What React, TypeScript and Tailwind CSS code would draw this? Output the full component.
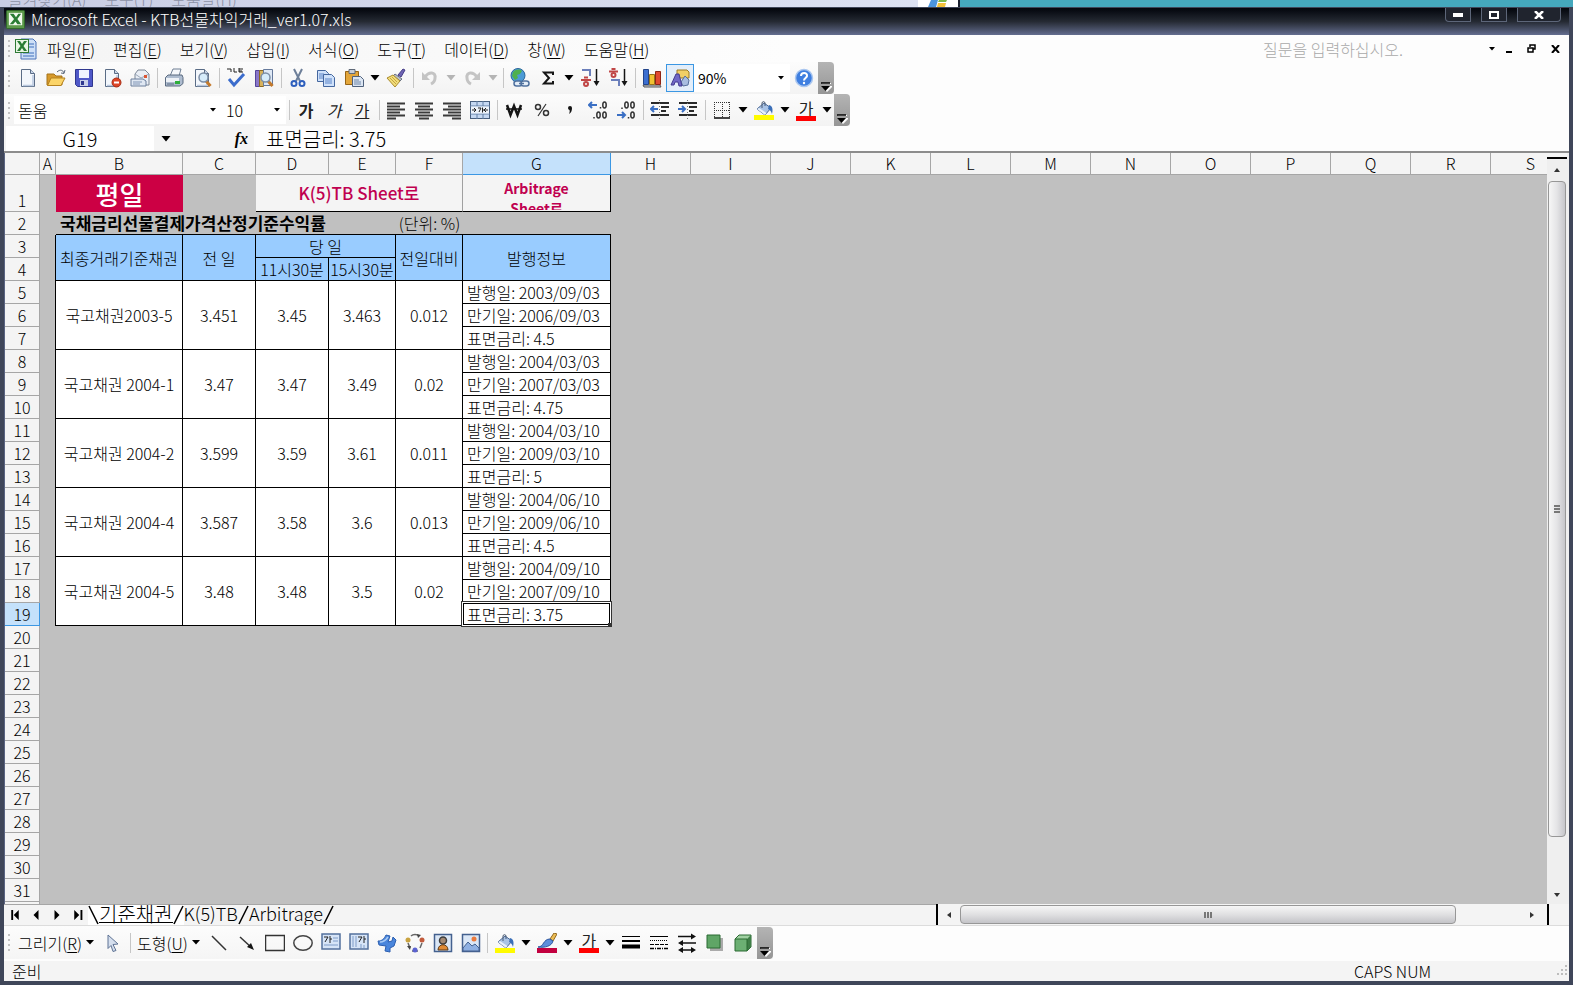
import React from "react";
import clsx from "clsx";

type IconItem = { name: string; icon: React.ReactNode };
type Bond = {
  name: string;
  prev: string;
  morning: string;
  afternoon: string;
  diff: string;
  info: string[];
};

const menus = [
  ["파일", "F"],
  ["편집", "E"],
  ["보기", "V"],
  ["삽입", "I"],
  ["서식", "O"],
  ["도구", "T"],
  ["데이터", "D"],
  ["창", "W"],
  ["도움말", "H"],
];

const bonds: Bond[] = [
  {
    name: "국고채권2003-5",
    prev: "3.451",
    morning: "3.45",
    afternoon: "3.463",
    diff: "0.012",
    info: ["발행일: 2003/09/03", "만기일: 2006/09/03", "표면금리: 4.5"],
  },
  {
    name: "국고채권 2004-1",
    prev: "3.47",
    morning: "3.47",
    afternoon: "3.49",
    diff: "0.02",
    info: ["발행일: 2004/03/03", "만기일: 2007/03/03", "표면금리: 4.75"],
  },
  {
    name: "국고채권 2004-2",
    prev: "3.599",
    morning: "3.59",
    afternoon: "3.61",
    diff: "0.011",
    info: ["발행일: 2004/03/10", "만기일: 2009/03/10", "표면금리: 5"],
  },
  {
    name: "국고채권 2004-4",
    prev: "3.587",
    morning: "3.58",
    afternoon: "3.6",
    diff: "0.013",
    info: ["발행일: 2004/06/10", "만기일: 2009/06/10", "표면금리: 4.5"],
  },
  {
    name: "국고채권 2004-5",
    prev: "3.48",
    morning: "3.48",
    afternoon: "3.5",
    diff: "0.02",
    info: ["발행일: 2004/09/10", "만기일: 2007/09/10", "표면금리: 3.75"],
  },
];

const restColumns = ["H", "I", "J", "K", "L", "M", "N", "O", "P", "Q", "R", "S"];
const emptyRows = [20, 21, 22, 23, 24, 25, 26, 27, 28, 29, 30, 31];

const Svg: React.FC<{ children: React.ReactNode }> = ({ children }) => (
  <svg width="20" height="20" viewBox="0 0 20 20" fill="none" aria-hidden="true">
    {children}
  </svg>
);

const Page = () => (
  <>
    <path d="M3.500 1.500h9l4 4v13h-13z" fill="#f3f7fc" stroke="#5a6c86" />
    <path d="M12.500 1.500v4h4" fill="#c9d6e8" stroke="#5a6c86" />
    <path d="M15 7v10.500H5" stroke="#b9c8de" strokeWidth="1.500" />
  </>
);

const Glass = () => (
  <>
    <path d="M14 13l4.500 5" stroke="#c47a2c" strokeWidth="3" />
    <circle cx="11.500" cy="9.500" r="4.500" fill="#d6ecfb" stroke="#7c8ea6" strokeWidth="1.500" />
  </>
);

const Bucket = () => (
  <>
    <path d="M3 9l7-6 7 5-6 7z" fill="#a9c3e6" stroke="#4a6794" />
    <path d="M3 9l8 6 1.500-2L5 8z" fill="#e6effa" />
    <path d="M15 5c4 1 4 5 3 9-1-3-2-4-4-5z" fill="#3b6fb8" />
    <path d="M8 8V2.500a2 2 0 0 1 3 0V6" stroke="#4a5a72" />
  </>
);

const ExcelLogo: React.FC<{ size: number }> = ({ size }) => (
  <svg width={size} height={size} viewBox="0 0 20 20" aria-hidden="true">
    <rect x="0.500" y="0.500" width="19" height="19" rx="1" fill="#5d9a4b" stroke="#2f6a28" />
    <path d="M3 3h14v13H3z" fill="#f2faee" />
    <path d="M4 4h4l2.500 3.500L13 4h3l-4 5.500 4 5.500h-4l-2-3-2.500 3H4l4.500-5.500z" fill="#2a7d34" />
  </svg>
);

const DocLogo = () => (
  <svg width="22" height="22" viewBox="0 0 22 22" aria-hidden="true">
    <path d="M6 1h12l3 3v17H6z" fill="#cfe0f7" stroke="#4a72b8" />
    <path d="M14 6h5M14 9h5M8 15h11M8 18h11" stroke="#6f94d0" strokeWidth="1.500" />
    <rect x="0.500" y="1.500" width="13" height="13" fill="#e9f6e4" stroke="#2f7a35" />
    <path d="M2 3h3l2 3 2-3h3L8.500 8 12 13H9l-2-3-2 3H2l3.500-5z" fill="#2a7d34" />
  </svg>
);

const fileIcons: IconItem[] = [
  { name: "새로 만들기", icon: <Page /> },
  {
    name: "열기",
    icon: (
      <>
        <path d="M1 6h7l2 2h6v9H1z" fill="#d79a2b" stroke="#a5731b" />
        <path d="M1.500 17.500L5 10h14l-4 7.500z" fill="#fbd468" stroke="#b5821f" />
        <path d="M11 4c3-3 6-2 7 1m1-3l-1 3.500L15 5" stroke="#5d6a7c" />
      </>
    ),
  },
  {
    name: "저장",
    icon: (
      <>
        <path d="M1.500 1.500h17v17h-15l-2-2z" fill="#4f58c8" stroke="#30388f" />
        <path d="M5 2h10v8H5z" fill="#eef2ff" />
        <path d="M6 12h8v6H6z" fill="#c9cfe8" />
        <path d="M7 13h3v4H7z" fill="#30388f" />
      </>
    ),
  },
  {
    name: "권한",
    icon: (
      <>
        <Page />
        <circle cx="14.500" cy="14.500" r="4.500" fill="#dd4527" stroke="#a82d14" />
        <path d="M12 14.500h5" stroke="#fff" strokeWidth="2" />
      </>
    ),
  },
  {
    name: "전자 메일",
    icon: (
      <>
        <path d="M5 11V6l3-4h7l4 4v11H9z" fill="#e9eef5" stroke="#7d8796" />
        <path d="M5 6l6 4 8-4" stroke="#9aa7b8" />
        <path d="M14 7h3v3h-3z" fill="#db5634" />
        <path d="M1 11h12l3 2v5H1z" fill="#dfe7f2" stroke="#6b7f9c" />
        <path d="M3 14h9M3 16h7" stroke="#8196b6" />
      </>
    ),
  },
];

const PrintIcon = () => (
  <Svg>
    <path d="M6 8l3-7h8l-2 7z" fill="#f6f8fb" stroke="#6f7f94" />
    <path d="M1.500 9.500L4 7h14l1 2.500v6L16 18H1.500z" fill="#aebccf" stroke="#5a6a80" />
    <path d="M2 10h13v4H2z" fill="#eef2f7" />
    <path d="M11 13h5v3h-5z" fill="#2fae3b" />
    <path d="M3 16h7" stroke="#5a6a80" />
  </Svg>
);

const PreviewIcon = () => (
  <Svg>
    <Page />
    <Glass />
  </Svg>
);

const SpellIcon = () => (
  <Svg>
    <path d="M1 1h4v3M8 0v4h3M13 1h4M13 3h3M13 0v4h4" stroke="#222" />
    <path d="M3 11l5 6L18 6" stroke="#3b6ccc" strokeWidth="3" />
  </Svg>
);

const ResearchIcon = () => (
  <Svg>
    <path d="M1.500 2.500h4v16h-4z" fill="#8a77c8" stroke="#54459a" />
    <path d="M5.500 2.500h4v16h-4z" fill="#d8b25c" stroke="#8d6a22" />
    <path d="M9.500 1.500h9v16h-9z" fill="#dfe9f6" stroke="#65799b" />
    <Glass />
  </Svg>
);

const CutIcon = () => (
  <Svg>
    <path d="M6 1l6 12M14 1L8 13" stroke="#6d7f99" strokeWidth="2" />
    <circle cx="6" cy="15.500" r="2.500" stroke="#2d5fbd" strokeWidth="2" />
    <circle cx="14" cy="15.500" r="2.500" stroke="#2d5fbd" strokeWidth="2" />
  </Svg>
);

const CopyIcon = () => (
  <Svg>
    <path d="M1.500 2.500h8l3 3v8h-11z" fill="#cfe1fa" stroke="#44679f" />
    <path d="M3 6h5M3 8h5M3 10h5" stroke="#5b84c8" />
    <path d="M7.500 6.500h8l3 3v9h-11z" fill="#cfe1fa" stroke="#44679f" />
    <path d="M9 11h7M9 13h7M9 15h7" stroke="#5b84c8" />
  </Svg>
);

const PasteIcon = () => (
  <Svg>
    <path d="M1.500 3.500h13v13h-13z" fill="#e3a63a" stroke="#966415" />
    <path d="M5 1.500h6v4H5z" fill="#c9cfd8" stroke="#606a78" />
    <path d="M8.500 8.500h8l3 3v7h-11z" fill="#dbe5f2" stroke="#4f617c" />
    <path d="M10 12h5M10 14h7M10 16h7" stroke="#6f86a8" />
  </Svg>
);

const BrushIcon = () => (
  <Svg>
    <path d="M12 7l5-6 2 1-4 7z" fill="#6e64b4" stroke="#453c86" />
    <path d="M9 6l7 5-2 2-7-5z" fill="#b9bfca" stroke="#6b7280" />
    <path d="M7 7l7 6-5 6-8-9z" fill="#f2dd7a" stroke="#a98a2c" />
    <path d="M4 10l6 6M6 9l5 5" stroke="#c4a440" />
  </Svg>
);

const UndoIcon: React.FC<{ redo?: boolean }> = ({ redo }) => (
  <Svg>
    <g transform={redo ? "matrix(-1 0 0 1 20 0)" : undefined}>
      <path d="M5 9c4-6 11-5 10 1 0 3-2 5-4 6" stroke="#c4c4c4" strokeWidth="3" />
      <path d="M2 4v8h8z" fill="#c4c4c4" />
    </g>
  </Svg>
);

const LinkIcon = () => (
  <Svg>
    <circle cx="8" cy="7.500" r="7" fill="#4c9bd6" stroke="#2b659c" />
    <path d="M3 4c3-3 7-3 9-1l-2 3-3 1 1 3-3 2-3-4z" fill="#4fb04f" />
    <rect x="4" y="13" width="8" height="5" rx="2.500" fill="#e4edf7" stroke="#50719e" strokeWidth="1.500" />
    <rect x="11" y="13" width="8" height="5" rx="2.500" fill="#e4edf7" stroke="#50719e" strokeWidth="1.500" />
    <path d="M9 15.500h5" stroke="#50719e" strokeWidth="1.500" />
  </Svg>
);

const SumIcon = () => (
  <Svg>
    <path d="M15 7V4.500H6l5 5.500-5 5.500h9V13" stroke="#151515" strokeWidth="2" />
  </Svg>
);

const SortIcon: React.FC<{ desc?: boolean }> = ({ desc }) => (
  <Svg>
    {desc ? (
      <>
        <path d="M1 3.500h9M3.500 1h4" stroke="#c04646" strokeWidth="2" />
        <circle cx="5.500" cy="7" r="2" stroke="#c04646" strokeWidth="2" />
        <path d="M3 12h8v6" stroke="#6b7fbb" strokeWidth="2" />
      </>
    ) : (
      <>
        <path d="M2 2h8v6" stroke="#6b7fbb" strokeWidth="2" />
        <path d="M1 12h10M4 9.500h4" stroke="#c04646" strokeWidth="2" />
        <circle cx="6" cy="16" r="2" stroke="#c04646" strokeWidth="2" />
      </>
    )}
    <path d="M16.500 1v15" stroke="#151515" strokeWidth="1.500" />
    <path d="M13.500 13h6l-3 5z" fill="#151515" />
  </Svg>
);

const ChartIcon = () => (
  <Svg>
    <path d="M1 17h17l1 2H2z" fill="#c9cdd4" stroke="#555" />
    <path d="M1.500 1.500h5v15h-5z" fill="#3c6fd0" stroke="#23448a" />
    <path d="M7.500 6.500h5v10h-5z" fill="#f1c232" stroke="#97741a" />
    <path d="M13.500 3.500h5v13h-5z" fill="#e0492f" stroke="#8e2413" />
  </Svg>
);

const DrawingIcon = () => (
  <Svg>
    <path d="M7 2h10l2 2v6h-9L7 7z" fill="#f1cf66" stroke="#9c7a25" />
    <path d="M11 14l4-6 4 4-1 5-5 1z" fill="#a8bde0" stroke="#56709c" />
    <path d="M1 17L6 6h3l3 12H9l-1-4H5l-1 3z" fill="#6f68c6" stroke="#423b91" />
  </Svg>
);

const HelpIcon = () => (
  <Svg>
    <circle cx="10" cy="10" r="8.500" fill="#3f7fe0" stroke="#a9c6ef" strokeWidth="1.500" />
    <path d="M7 8c0-4 6.500-4 6 0-.3 2-3 2-3 4.500" stroke="#fff" strokeWidth="2" />
    <circle cx="10" cy="15" r="1.200" fill="#fff" />
  </Svg>
);

const alignPaths = {
  left: "M1 6.500h13M1 12.500h13M1 18.500h9",
  center: "M4 6.500h12M4 12.500h12M5 18.500h10",
  right: "M6 6.500h13M6 12.500h13M10 18.500h9",
};

const AlignIcon: React.FC<{ align: keyof typeof alignPaths }> = ({ align }) => (
  <Svg>
    <path d="M1 3.500h18M1 9.500h18M1 15.500h18" stroke="#3a3a3a" strokeWidth="2" />
    <path d={alignPaths[align]} stroke="#3a3a3a" strokeWidth="2" />
  </Svg>
);

const MergeIcon = () => (
  <Svg>
    <rect x="0.500" y="1.500" width="19" height="17" fill="#c5d8f2" stroke="#49607f" />
    <path d="M0 6h20M0 14h20M7 1v5M13 1v5M7 14v5M13 14v5" stroke="#6580a6" />
    <path d="M1 6.500h18v7H1z" fill="#eef4fc" />
    <path d="M2 10h4M18 10h-4M4 8l2 2-2 2M16 8l-2 2 2 2M8 8h3l-2 4M12.500 7.500v5M12.500 10h1.500" stroke="#222" />
  </Svg>
);

const WonIcon = () => (
  <Svg>
    <path d="M3 5l3.500 10L10 6l3.500 9L17 5" stroke="#151515" strokeWidth="2.500" />
    <path d="M2 9h16" stroke="#151515" strokeWidth="1.500" />
  </Svg>
);

const PercentIcon = () => (
  <Svg>
    <circle cx="6" cy="7" r="2.500" stroke="#333" strokeWidth="1.500" />
    <circle cx="14" cy="13" r="2.500" stroke="#333" strokeWidth="1.500" />
    <path d="M14 4L6 16" stroke="#333" strokeWidth="1.200" />
  </Svg>
);

const CommaIcon = () => (
  <Svg>
    <path d="M8 8a2 2 0 1 1 4 0c0 3-1 5-3 6 .5-1 1-3 .5-4A2 2 0 0 1 8 8z" fill="#151515" />
  </Svg>
);

const DecimalIcon: React.FC<{ less?: boolean }> = ({ less }) => (
  <Svg>
    <g stroke="#333" strokeWidth="1.500">
      {less ? (
        <>
          <ellipse cx="10.500" cy="5" rx="1.700" ry="3" />
          <ellipse cx="16.500" cy="5" rx="1.700" ry="3" />
          <ellipse cx="16.500" cy="15" rx="1.700" ry="3" />
          <path d="M6 7.500v1.500M12.500 17v1.500" />
        </>
      ) : (
        <>
          <ellipse cx="16.500" cy="5" rx="1.700" ry="3" />
          <ellipse cx="10.500" cy="15" rx="1.700" ry="3" />
          <ellipse cx="16.500" cy="15" rx="1.700" ry="3" />
          <path d="M12.500 7v1.500M6 17v1.500" />
        </>
      )}
    </g>
    <path
      d={less ? "M1 15h8M6 12l3 3-3 3" : "M9 5H1M4 2L1 5l3 3"}
      stroke="#3a6fc4"
      strokeWidth="2"
    />
  </Svg>
);

const IndentIcon: React.FC<{ more?: boolean }> = ({ more }) => (
  <Svg>
    <path d="M1 3h18M11 7h8M11 11h5M1 15h18" stroke="#2a2a2a" strokeWidth="2" />
    <path d="M9.500 0v20" stroke="#777" strokeDasharray="1 2" />
    <path
      d={more ? "M0 9h6M4 6l3 3-3 3" : "M8 9H2M4 6L1 9l3 3"}
      stroke="#3a6fc4"
      strokeWidth="2"
    />
  </Svg>
);

const BorderIcon = () => (
  <Svg>
    <path
      d="M2 2.500h16M2 10.500h16M2.500 2v15M10.500 2v15M17.500 2v15"
      stroke="#333"
      strokeDasharray="1 1"
    />
    <path d="M2 18h16" stroke="#444" strokeWidth="2" />
  </Svg>
);

const FillIcon = () => (
  <Svg>
    <Bucket />
    <path d="M0 15h20v5H0z" fill="#fffb00" />
  </Svg>
);

const LineColorIcon = () => (
  <Svg>
    <path d="M13 6l4-6 3 1-4 7z" fill="#ecbd55" stroke="#92691f" />
    <path d="M1 14c6 0 5-8 12-8l3 2c-1 5-8 7-15 6z" fill="#5d8fdc" stroke="#2c569f" />
    <path d="M0 15h20v5H0z" fill="#c2003f" />
  </Svg>
);

const Caret: React.FC<{ dim?: boolean; small?: boolean }> = ({ dim, small }) => (
  <svg width="10" height="6" viewBox="0 0 10 6" aria-hidden="true">
    <path d={small ? "M2 1h6L5 4.500z" : "M0.500 0h9L5 5.500z"} fill={dim ? "#b5b5b5" : "#000"} />
  </svg>
);

const Tool: React.FC<{ label: string; active?: boolean; children: React.ReactNode }> = ({
  label,
  active,
  children,
}) => (
  <button
    type="button"
    aria-label={label}
    className={clsx(
      "flex h-7 w-7 shrink-0 items-center justify-center",
      active && "border border-[#3b97e3] bg-[#e3eefa]"
    )}
  >
    {children}
  </button>
);

const Drop: React.FC<{ label: string; dim?: boolean }> = ({ label, dim }) => (
  <button
    type="button"
    aria-label={label}
    className="flex h-7 w-3.5 shrink-0 items-center justify-center"
  >
    <Caret dim={dim} />
  </button>
);

const Divider = () => (
  <div className="flex w-1.5 shrink-0 justify-center">
    <div className="h-5 w-px bg-[#c6c6c6]" />
  </div>
);

const Grip = () => (
  <div className="flex w-2.5 shrink-0 flex-col items-center gap-[3px]">
    {[0, 1, 2, 3].map((dot) => (
      <span key={dot} className="h-0.5 w-0.5 bg-[#c2c2c2]" />
    ))}
  </div>
);

const Overflow: React.FC<{ label: string }> = ({ label }) => (
  <button
    type="button"
    aria-label={label}
    className="flex h-8 w-4 shrink-0 items-end justify-center rounded-r-sm bg-gradient-to-b from-[#b4b4b4] to-[#969696] pb-0.5"
  >
    <svg width="12" height="10" viewBox="0 0 12 10" aria-hidden="true">
      <path d="M2 1.500h9M2 4.500h10l-5 5z" fill="#fff" stroke="#fff" />
      <path d="M1 1h9" stroke="#000" strokeWidth="1.500" />
      <path d="M1 4h9L5.500 9z" fill="#000" />
    </svg>
  </button>
);

const FontColor: React.FC<{ label: string }> = ({ label }) => (
  <button
    type="button"
    aria-label={label}
    className="flex h-7 w-7 shrink-0 flex-col items-center justify-center"
  >
    <span className="text-base font-normal leading-4 text-[#222]">가</span>
    <span className="h-[5px] w-5 bg-[#f00]" />
  </button>
);

const BackgroundWindows = () => (
  <div className="flex h-[7px] shrink-0 overflow-hidden bg-[#45a8bd]">
    <div className="flex w-[61%] overflow-hidden border-r-2 border-[#1b2130] bg-gradient-to-r from-[#c9cde4] to-[#dde2f2]">
      <div className="flex flex-1 items-end gap-[18px] pl-2 text-base leading-4 text-[#8d92a6]">
        <span>즐겨찾기(A)</span>
        <span>도구(T)</span>
        <span>도움말(H)</span>
      </div>
      <div className="flex w-10 justify-center bg-white">
        <svg width="20" height="7" viewBox="0 0 20 7" aria-hidden="true">
          <path d="M3 0h7L8 7H0z" fill="#4b95df" />
          <path d="M11 0h8l-1 2h-8z" fill="#7cb84a" />
          <path d="M10 3h8l-1 4H9z" fill="#f3c13a" />
        </svg>
      </div>
    </div>
  </div>
);

const captionButton =
  "flex h-[14px] items-center justify-center border border-t-0 border-[#5d6679] bg-[#20242e]";

const TitleBar = () => (
  <header className="flex h-[27px] shrink-0 items-start justify-between bg-gradient-to-b from-[#04060c] via-[#252a33] to-[#646e90] pl-0.5 pr-2">
    <div className="flex items-center gap-1.5 pt-px">
      <ExcelLogo size={19} />
      <h1 className="text-base font-light leading-5 text-white">
        Microsoft Excel - KTB선물차익거래_ver1.07.xls
      </h1>
    </div>
    <div className="flex gap-2.5">
      <button type="button" aria-label="최소화" className={clsx(captionButton, "w-[26px] rounded-bl")}>
        <span className="h-1 w-2.5 bg-white" />
      </button>
      <button type="button" aria-label="최대화" className={clsx(captionButton, "w-[26px]")}>
        <span className="h-2 w-2.5 border-2 border-white" />
      </button>
      <button type="button" aria-label="닫기" className={clsx(captionButton, "w-11 rounded-br")}>
        <svg width="10" height="8" viewBox="0 0 10 8" aria-hidden="true">
          <path d="M1 0l8 8M9 0L1 8" stroke="#fff" strokeWidth="2.500" />
        </svg>
      </button>
    </div>
  </header>
);

const MenuBar = () => (
  <div className="flex h-[27px] shrink-0 items-center justify-between bg-gradient-to-r from-[#f4f4f4] to-[#fdfdfd] to-50%">
    <nav className="flex items-center">
      <Grip />
      <div className="flex w-6 justify-center">
        <DocLogo />
      </div>
      {menus.map(([label, key]) => (
        <button key={key} type="button" className="px-[9px] text-base leading-6">
          {label}(<u className="underline-offset-2">{key}</u>)
        </button>
      ))}
    </nav>
    <div className="flex items-center">
      <input
        aria-label="도움말 검색"
        placeholder="질문을 입력하십시오."
        className="w-56 bg-transparent text-base leading-6 outline-none placeholder:text-[#a9a9a9]"
      />
      <Caret small />
      <div className="flex items-center gap-1.5 pl-1 pr-1">
        <button type="button" aria-label="문서 최소화" className="flex h-4 w-4 items-end justify-center pb-1">
          <span className="h-0.5 w-1.5 bg-black" />
        </button>
        <button type="button" aria-label="문서 복원" className="flex h-4 w-4 items-center justify-center">
          <svg width="9" height="9" viewBox="0 0 9 9" fill="none" aria-hidden="true">
            <path d="M3 3V1h5v4H6" stroke="#000" strokeWidth="1.500" />
            <path d="M1 4h5v4H1z" stroke="#000" strokeWidth="1.500" />
          </svg>
        </button>
        <button type="button" aria-label="문서 닫기" className="flex h-4 w-5 items-center justify-center">
          <svg width="9" height="8" viewBox="0 0 9 8" aria-hidden="true">
            <path d="M1 0l7 8M8 0L1 8" stroke="#000" strokeWidth="2" />
          </svg>
        </button>
      </div>
    </div>
  </div>
);

const StandardToolbar = () => (
  <div className="flex h-8 shrink-0 items-center bg-[#fdfdfd]">
    <div className="flex h-full items-center bg-gradient-to-b from-[#fcfcfc] to-[#f3f3f3]">
      <Grip />
      {fileIcons.map(({ name, icon }) => (
        <Tool key={name} label={name}>
          <Svg>{icon}</Svg>
        </Tool>
      ))}
      <Divider />
      <Tool label="인쇄"><PrintIcon /></Tool>
      <Tool label="미리 보기"><PreviewIcon /></Tool>
      <Divider />
      <Tool label="맞춤법 검사"><SpellIcon /></Tool>
      <Tool label="리서치"><ResearchIcon /></Tool>
      <Divider />
      <Tool label="잘라내기"><CutIcon /></Tool>
      <Tool label="복사"><CopyIcon /></Tool>
      <Tool label="붙여넣기"><PasteIcon /></Tool>
      <Drop label="붙여넣기 옵션" />
      <Tool label="서식 복사"><BrushIcon /></Tool>
      <Divider />
      <Tool label="실행 취소"><UndoIcon /></Tool>
      <Drop label="실행 취소 목록" dim />
      <Tool label="다시 실행"><UndoIcon redo /></Tool>
      <Drop label="다시 실행 목록" dim />
      <Divider />
      <Tool label="하이퍼링크"><LinkIcon /></Tool>
      <Tool label="자동 합계"><SumIcon /></Tool>
      <Drop label="함수 목록" />
      <Tool label="오름차순 정렬"><SortIcon /></Tool>
      <Tool label="내림차순 정렬"><SortIcon desc /></Tool>
      <Divider />
      <Tool label="차트 마법사"><ChartIcon /></Tool>
      <Tool label="그리기" active><DrawingIcon /></Tool>
      <div className="relative flex items-center bg-white">
        <select
          aria-label="확대/축소"
          defaultValue="90%"
          className="h-7 w-24 appearance-none bg-transparent pl-1 text-sm font-normal"
        >
          <option>90%</option>
        </select>
        <span className="pointer-events-none absolute right-1"><Caret small /></span>
      </div>
      <Tool label="도움말"><HelpIcon /></Tool>
      <Overflow label="표준 도구 모음 옵션" />
    </div>
  </div>
);

const FormatToolbar = () => (
  <div className="flex h-8 shrink-0 items-center bg-[#fdfdfd]">
    <div className="flex h-full items-center bg-gradient-to-b from-[#fcfcfc] to-[#f3f3f3]">
      <Grip />
      <div className="relative flex items-center bg-white">
        <select
          aria-label="글꼴"
          defaultValue="돋움"
          className="h-7 w-52 appearance-none bg-transparent pl-1 text-base font-light"
        >
          <option>돋움</option>
        </select>
        <span className="pointer-events-none absolute right-1"><Caret small /></span>
      </div>
      <div className="relative flex items-center bg-white">
        <select
          aria-label="글꼴 크기"
          defaultValue="10"
          className="h-7 w-16 appearance-none bg-transparent pl-1 text-base font-light"
        >
          <option>10</option>
        </select>
        <span className="pointer-events-none absolute right-1"><Caret small /></span>
      </div>
      <Divider />
      <button type="button" aria-label="굵게" className="h-7 w-7 text-base font-bold leading-6 text-[#222]">가</button>
      <button type="button" aria-label="기울임꼴" className="h-7 w-7 text-base font-normal italic leading-6 text-[#222]">가</button>
      <button type="button" aria-label="밑줄" className="h-7 w-7 text-base font-normal leading-6 text-[#222] underline">가</button>
      <Divider />
      <Tool label="왼쪽 맞춤"><AlignIcon align="left" /></Tool>
      <Tool label="가운데 맞춤"><AlignIcon align="center" /></Tool>
      <Tool label="오른쪽 맞춤"><AlignIcon align="right" /></Tool>
      <Tool label="병합하고 가운데 맞춤"><MergeIcon /></Tool>
      <Divider />
      <Tool label="통화 스타일"><WonIcon /></Tool>
      <Tool label="백분율 스타일"><PercentIcon /></Tool>
      <Tool label="쉼표 스타일"><CommaIcon /></Tool>
      <Tool label="자릿수 늘림"><DecimalIcon /></Tool>
      <Tool label="자릿수 줄임"><DecimalIcon less /></Tool>
      <Divider />
      <Tool label="내어쓰기"><IndentIcon /></Tool>
      <Tool label="들여쓰기"><IndentIcon more /></Tool>
      <Divider />
      <Tool label="테두리"><BorderIcon /></Tool>
      <Drop label="테두리 목록" />
      <Tool label="채우기 색"><FillIcon /></Tool>
      <Drop label="채우기 색 목록" />
      <FontColor label="글꼴 색" />
      <Drop label="글꼴 색 목록" />
      <Overflow label="서식 도구 모음 옵션" />
    </div>
  </div>
);

const FormulaBar = () => (
  <div className="flex h-[27px] shrink-0 items-center border-b-2 border-[#8c8c8c] bg-[#f4f4f4] pl-0.5">
    <input
      aria-label="이름 상자"
      defaultValue="G19"
      className="h-full w-[148px] bg-white text-center text-xl leading-6 outline-none"
    />
    <button type="button" aria-label="이름 목록" className="flex h-full w-6 items-center justify-center">
      <Caret />
    </button>
    <button
      type="button"
      aria-label="함수 삽입"
      className="h-full w-[76px] shrink-0 pr-1.5 text-right font-['Liberation_Serif',serif] text-base font-bold italic leading-6"
    >
      fx
    </button>
    <input
      aria-label="수식 입력줄"
      defaultValue="표면금리: 3.75"
      className="h-full min-w-0 flex-1 bg-[#fdfdfd] pl-3 text-xl leading-6 outline-none"
    />
  </div>
);

const cell = "border-b border-r border-black bg-white p-0 text-center";
const headCell = "border-b border-r border-black bg-[#99ccff] p-0 text-center font-light";
const colHead = "border-b border-r border-[#a6a6a6] bg-[#f4f4f4] p-0 font-light";

const RowHead: React.FC<{ n: number; current?: boolean }> = ({ n, current }) => (
  <th
    scope="row"
    className={clsx(
      "border-b border-r p-0 align-bottom font-light",
      current ? "border-[#3b97e3] bg-[#c4e1fb]" : "border-[#a6a6a6] bg-[#f4f4f4]"
    )}
  >
    {n}
  </th>
);

const Sheet = () => (
  <div className="min-w-0 flex-1 overflow-hidden bg-[#c0c0c0]">
    <table className="w-[1566px] table-fixed border-separate border-spacing-0 whitespace-nowrap text-base leading-[22px]">
      <colgroup>
        <col className="w-[35px]" />
        <col className="w-4" />
        <col className="w-[127px]" />
        <col className="w-[73px]" />
        <col className="w-[73px]" />
        <col className="w-[67px]" />
        <col className="w-[67px]" />
        <col className="w-[148px]" />
        {restColumns.map((name) => (
          <col key={name} className="w-20" />
        ))}
      </colgroup>
      <thead>
        <tr className="h-[22px] leading-[21px]">
          <td className={colHead} />
          {["A", "B", "C", "D", "E", "F"].map((name) => (
            <th key={name} scope="col" className={colHead}>{name}</th>
          ))}
          <th scope="col" className="border-b border-r border-[#3b97e3] bg-[#c4e1fb] p-0 font-light">G</th>
          {restColumns.map((name) => (
            <th key={name} scope="col" className={colHead}>{name}</th>
          ))}
        </tr>
      </thead>
      <tbody>
        <tr className="h-[37px]">
          <RowHead n={1} />
          <td />
          <td className="bg-[#cc0044] p-0 text-center text-[26px] font-medium text-white">평일</td>
          <td />
          <td colSpan={3} className="p-0">
            <button
              type="button"
              className="block h-[37px] w-full border-b border-r border-b-black border-r-[#a0a0a0] bg-[#f4f4f4] text-[17px] font-medium text-[#c00050]"
            >
              K(5)TB Sheet로
            </button>
          </td>
          <td className="p-0">
            <button
              type="button"
              className="block h-[37px] w-full whitespace-normal border-b border-r border-black bg-[#f4f4f4] px-8 text-sm font-bold leading-5 text-[#c00050]"
            >
              <span className="block h-[34px] overflow-hidden pt-0.5">Arbitrage Sheet로</span>
            </button>
          </td>
          <td colSpan={12} />
        </tr>
        <tr className="h-[23px]">
          <RowHead n={2} />
          <td />
          <td colSpan={4} className="border-b border-black p-0 pl-1 text-[17px] font-bold">
            국채금리선물결제가격산정기준수익률
          </td>
          <td className="border-b border-black p-0 text-center">(단위: %)</td>
          <td className="border-b border-black" />
          <td colSpan={12} />
        </tr>
        <tr className="h-[23px]">
          <RowHead n={3} />
          <td className="border-r border-black" />
          <th rowSpan={2} className={headCell}>최종거래기준채권</th>
          <th rowSpan={2} className={headCell}>전 일</th>
          <th colSpan={2} className={headCell}>당 일</th>
          <th rowSpan={2} className={headCell}>전일대비</th>
          <th rowSpan={2} className={headCell}>발행정보</th>
          <td colSpan={12} />
        </tr>
        <tr className="h-[23px]">
          <RowHead n={4} />
          <td className="border-r border-black" />
          <th className={headCell}>11시30분</th>
          <th className={headCell}>15시30분</th>
          <td colSpan={12} />
        </tr>
        {bonds.map((bond, group) =>
          bond.info.map((line, i) => {
            const n = 5 + group * 3 + i;
            const current = n === 19;
            return (
              <tr key={n} className="h-[23px]">
                <RowHead n={n} current={current} />
                <td className="border-r border-black" />
                {i === 0 && (
                  <>
                    <td rowSpan={3} className={cell}>{bond.name}</td>
                    <td rowSpan={3} className={cell}>{bond.prev}</td>
                    <td rowSpan={3} className={cell}>{bond.morning}</td>
                    <td rowSpan={3} className={cell}>{bond.afternoon}</td>
                    <td rowSpan={3} className={cell}>{bond.diff}</td>
                  </>
                )}
                <td className="relative border-b border-r border-black bg-white p-0 pl-1 text-left">
                  {line}
                  {current && (
                    <>
                      <span className="absolute -inset-0.5 border border-[#333] outline outline-1 -outline-offset-2 outline-white" />
                      <span className="absolute inset-0 border border-black" />
                      <span className="absolute -bottom-0.5 -right-0.5 h-1 w-1 bg-[#333]" />
                    </>
                  )}
                </td>
                <td colSpan={12} />
              </tr>
            );
          })
        )}
        {emptyRows.map((n) => (
          <tr key={n} className="h-[23px]">
            <RowHead n={n} />
            <td colSpan={19} />
          </tr>
        ))}
        <tr className="h-[23px]">
          <td className="border-r border-[#a6a6a6] bg-[#f4f4f4]" />
          <td colSpan={19} />
        </tr>
      </tbody>
    </table>
  </div>
);

const Arrow: React.FC<{ d: string }> = ({ d }) => (
  <svg width="8" height="8" viewBox="0 0 8 8" aria-hidden="true">
    <path d={d} fill="#333" />
  </svg>
);

const VerticalScroll = () => (
  <div className="flex w-[22px] shrink-0 flex-col bg-[#efefef] pr-0.5">
    <div className="h-1.5 border-b-2 border-black bg-[#f4f4f4]" />
    <button type="button" aria-label="위로" className="flex h-[22px] items-center justify-center">
      <Arrow d="M1 6h6L4 2z" />
    </button>
    <div className="min-h-0 flex-1 px-px">
      <div className="flex h-[93%] items-center justify-center rounded-sm border border-[#979797] bg-gradient-to-r from-[#f6f6f6] via-[#e4e4e6] to-[#c6c6ca]">
        <span className="flex flex-col gap-px">
          <span className="h-0.5 w-1.5 bg-[#777]" />
          <span className="h-0.5 w-1.5 bg-[#777]" />
          <span className="h-0.5 w-1.5 bg-[#777]" />
        </span>
      </div>
    </div>
    <button type="button" aria-label="아래로" className="flex h-[18px] items-center justify-center">
      <Arrow d="M1 2h6L4 6z" />
    </button>
  </div>
);

const TabEdge: React.FC<{ d: string }> = ({ d }) => (
  <svg width="11" height="20" viewBox="0 0 11 20" fill="none" aria-hidden="true">
    <path d={d} stroke="#000" strokeWidth="1.500" />
  </svg>
);

const SheetTab: React.FC<{ label: string; active?: boolean }> = ({ label, active }) => (
  <button
    type="button"
    className={clsx("flex h-5 items-start", active ? "bg-white text-xl" : "bg-[#f4f4f4] text-lg")}
  >
    {active && <TabEdge d="M1 1l9 18" />}
    <span className={clsx("h-[18px] leading-[17px]", active && "border-b border-black")}>{label}</span>
    <TabEdge d="M1 19l9-18" />
  </button>
);

const TabBar = () => (
  <div className="flex h-[21px] shrink-0 bg-[#f4f4f4]">
    <div className="flex w-[932px] min-w-0 shrink items-start border-t border-[#a6a6a6]">
      {[
        ["첫 시트", "M1 0h1.500v8H1zM7 0v8L3 4z"],
        ["이전 시트", "M6 0v8L2 4z"],
        ["다음 시트", "M2 0v8l4-4z"],
        ["마지막 시트", "M6 0h1.500v8H6zM1 0v8l4-4z"],
      ].map(([label, d]) => (
        <button
          key={label}
          type="button"
          aria-label={label}
          className="flex h-5 w-[21px] shrink-0 items-center justify-center"
        >
          <svg width="10" height="10" viewBox="0 0 8 8" aria-hidden="true">
            <path d={d} />
          </svg>
        </button>
      ))}
      <SheetTab label="기준채권" active />
      <SheetTab label="K(5)TB" />
      <SheetTab label="Arbitrage" />
    </div>
    <div className="flex flex-1 border-l-2 border-r-2 border-black">
      <button type="button" aria-label="왼쪽으로" className="flex w-[22px] shrink-0 items-center justify-center">
        <Arrow d="M6 1v6L2 4z" />
      </button>
      <div className="min-w-0 flex-1 py-px">
        <div className="flex h-full w-[89%] items-center justify-center gap-px rounded-sm border border-[#979797] bg-gradient-to-b from-[#f6f6f6] via-[#e0e0e2] to-[#c4c4c8]">
          <span className="h-1.5 w-0.5 bg-[#777]" />
          <span className="h-1.5 w-0.5 bg-[#777]" />
          <span className="h-1.5 w-0.5 bg-[#777]" />
        </div>
      </div>
      <button type="button" aria-label="오른쪽으로" className="flex w-[30px] shrink-0 items-center justify-center">
        <Arrow d="M2 1v6l4-3z" />
      </button>
    </div>
    <div className="w-5 shrink-0" />
  </div>
);

const drawTools: IconItem[] = [
  { name: "선", icon: <path d="M3 3l14 14" stroke="#333" strokeWidth="1.500" /> },
  {
    name: "화살표",
    icon: (
      <>
        <path d="M3 4l12 11" stroke="#333" strokeWidth="1.500" />
        <path d="M17 17l-7-3 4-4z" fill="#151515" />
      </>
    ),
  },
  { name: "직사각형", icon: <path d="M0.500 2.500h19v15h-19z" stroke="#333" strokeWidth="1.500" /> },
  { name: "타원", icon: <ellipse cx="10" cy="10" rx="9.200" ry="7.200" stroke="#444" strokeWidth="1.500" /> },
  {
    name: "텍스트 상자",
    icon: (
      <>
        <rect x="1" y="1" width="18" height="15" fill="#d6e4f7" stroke="#53709d" strokeWidth="1.500" />
        <path d="M3 4h4l-3 5M9 3v7M9 6h2" stroke="#222" />
        <path d="M12 5h5M12 8h5M3 12h14" stroke="#7f9cc8" />
      </>
    ),
  },
  {
    name: "세로 텍스트 상자",
    icon: (
      <>
        <rect x="1" y="1" width="18" height="15" fill="#d6e4f7" stroke="#53709d" strokeWidth="1.500" />
        <path d="M9 4h4l-3 5M15 3v7M15 6h2" stroke="#222" />
        <path d="M4 3v11M7 3v11M12 11v4M15 12v3" stroke="#7f9cc8" />
      </>
    ),
  },
  {
    name: "WordArt",
    icon: (
      <>
        <path d="M1 8c4 0 6-2 8-6l4 1-2 6 4-1 1-4 3 3-2 6-4 2 0 4-5-1 1-5-7-1z" fill="#4a86dc" stroke="#2c5fb0" />
        <path d="M3 9c4 0 6-2 8-5" stroke="#a9cbf5" strokeWidth="1.500" />
      </>
    ),
  },
  {
    name: "다이어그램",
    icon: (
      <>
        <path d="M6 3c2-2 6-2 8 0M17 10l-2 5M13 18H7M5 15l-2-5" stroke="#666" strokeWidth="1.500" />
        <path d="M12 1l4 1-3 3zM6 13l-4 0 3 4z" fill="#444" />
        <circle cx="3" cy="7" r="2.500" fill="#c9a340" />
        <circle cx="17" cy="7" r="2.500" fill="#c25b3c" />
        <circle cx="10" cy="17" r="2.500" fill="#5b62d0" />
      </>
    ),
  },
  {
    name: "클립 아트",
    icon: (
      <>
        <rect x="1.500" y="1.500" width="17" height="17" fill="#dbe7f6" stroke="#44618f" strokeWidth="1.500" />
        <circle cx="10" cy="7.500" r="3.500" fill="#a58a73" stroke="#3c3c3c" strokeWidth="1.500" />
        <path d="M5 17c0-7 10-7 10 0z" fill="#e08a34" stroke="#5b3b1b" />
      </>
    ),
  },
  {
    name: "그림",
    icon: (
      <>
        <rect x="1.500" y="1.500" width="17" height="17" fill="#dbe7f6" stroke="#44618f" strokeWidth="1.500" />
        <circle cx="13" cy="6" r="2.500" fill="#ea7a3c" />
        <path d="M2 15l5-6 4 4 3-2 4 4v3H2z" fill="#8fb0e2" stroke="#44618f" />
      </>
    ),
  },
];

const shapeTools: IconItem[] = [
  {
    name: "선 스타일",
    icon: (
      <>
        <path d="M1 3.500h18" stroke="#000" />
        <path d="M1 8h18" stroke="#000" strokeWidth="2" />
        <path d="M1 13.500h18" stroke="#000" strokeWidth="4" />
      </>
    ),
  },
  {
    name: "대시 스타일",
    icon: (
      <>
        <path d="M1 3.500h18" stroke="#000" />
        <path d="M1 7.500h18" stroke="#000" strokeDasharray="1 1" />
        <path d="M1 11.500h18" stroke="#000" strokeDasharray="4 1" />
        <path d="M1 15.500h18" stroke="#000" strokeWidth="1.500" strokeDasharray="4 1 1 1" />
      </>
    ),
  },
  {
    name: "화살표 스타일",
    icon: (
      <>
        <path d="M1 3.500h14M5 10h14M4 17h12" stroke="#111" strokeWidth="1.500" />
        <path d="M14 0.500l5 3-5 3zM6 7l-5 3 5 3zM6 14l-5 3 5 3zM14 14l5 3-5 3z" fill="#111" />
      </>
    ),
  },
  {
    name: "그림자 스타일",
    icon: (
      <>
        <path d="M5 5h13v13H5z" fill="#aaa" />
        <path d="M2 2h13v13H2z" fill="#5fa566" stroke="#2b6a33" />
      </>
    ),
  },
  {
    name: "3차원 스타일",
    icon: (
      <>
        <path d="M2 6l4-4h12v12l-4 4z" fill="#9fd0a1" stroke="#2b6a33" />
        <path d="M14 6l4-4v12l-4 4z" fill="#3f7f47" />
        <path d="M2 6h12v12H2z" fill="#6cb073" stroke="#2b6a33" />
      </>
    ),
  },
];

const TextMenu: React.FC<{ label: string; hotkey: string }> = ({ label, hotkey }) => (
  <button type="button" className="flex items-center gap-1 pl-1 pr-[5px] text-base leading-6">
    <span>
      {label}(<u className="underline-offset-2">{hotkey}</u>)
    </span>
    <svg width="8" height="5" viewBox="0 0 8 5" aria-hidden="true">
      <path d="M0 0h8L4 4.500z" />
    </svg>
  </button>
);

const DrawToolbar = () => (
  <div className="flex h-9 shrink-0 items-center border-t border-[#dcdcdc] bg-[#fdfdfd] pb-0.5">
    <div className="flex h-full items-center bg-gradient-to-b from-[#fcfcfc] to-[#f5f5f5]">
      <Grip />
      <TextMenu label="그리기" hotkey="R" />
      <Tool label="개체 선택">
        <Svg>
          <path d="M5 2l10 9-5 .500 3 6-3 1-2-6-3 3z" fill="#d5dfee" stroke="#5f7394" />
        </Svg>
      </Tool>
      <Divider />
      <TextMenu label="도형" hotkey="U" />
      {drawTools.map((tool) => (
        <Tool key={tool.name} label={tool.name}>
          <Svg>{tool.icon}</Svg>
        </Tool>
      ))}
      <Divider />
      <Tool label="도형 채우기 색"><FillIcon /></Tool>
      <Drop label="도형 채우기 색 목록" />
      <Tool label="선 색"><LineColorIcon /></Tool>
      <Drop label="선 색 목록" />
      <FontColor label="텍스트 색" />
      <Drop label="텍스트 색 목록" />
      {shapeTools.map((tool) => (
        <Tool key={tool.name} label={tool.name}>
          <Svg>{tool.icon}</Svg>
        </Tool>
      ))}
      <Overflow label="그리기 도구 모음 옵션" />
    </div>
  </div>
);

const StatusBar = () => (
  <footer className="flex h-5 shrink-0 items-center bg-[#f4f4f4] pl-2 text-base leading-5">
    <span className="flex-1">준비</span>
    <span className="w-[203px]">CAPS NUM</span>
    <svg width="12" height="12" viewBox="0 0 12 12" aria-hidden="true">
      <path
        d="M8 0h2v2H8zM4 4h2v2H4zM8 4h2v2H8zM0 8h2v2H0zM4 8h2v2H4zM8 8h2v2H8z"
        fill="#bdbdbd"
      />
    </svg>
  </footer>
);

export default function App() {
  return (
    <div className="flex h-screen flex-col overflow-hidden bg-[#5a6482] font-['Noto_Sans_CJK_KR',sans-serif] font-light text-black">
      <BackgroundWindows />
      <div className="flex min-h-0 flex-1 flex-col border-x-4 border-b-4 border-t border-[#3f4659]">
        <TitleBar />
        <MenuBar />
        <StandardToolbar />
        <FormatToolbar />
        <FormulaBar />
        <main className="flex min-h-0 flex-1 pl-px">
          <Sheet />
          <VerticalScroll />
        </main>
        <TabBar />
        <DrawToolbar />
        <StatusBar />
      </div>
    </div>
  );
}
